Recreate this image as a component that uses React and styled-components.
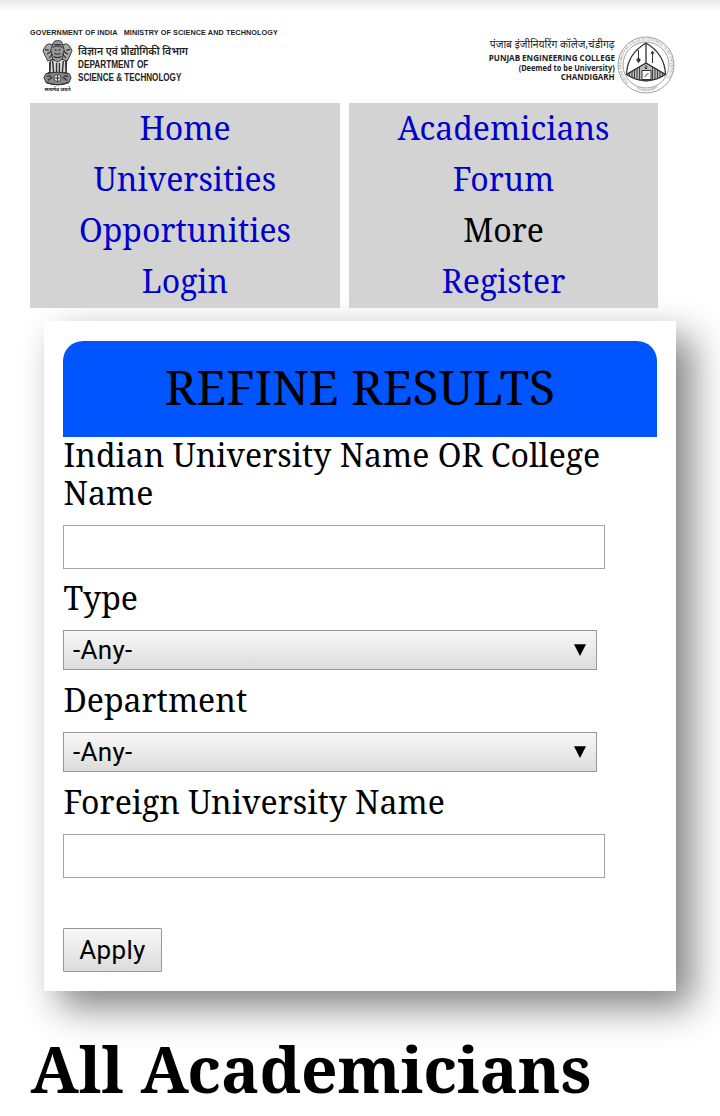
import React from "react";
import styled, { createGlobalStyle } from "styled-components";

const serif = `"Noto Serif", "Droid Serif", "DejaVu Serif Condensed", "DejaVu Serif", serif`;
const hindi = `"Noto Sans Devanagari", "Lohit Devanagari", "Noto Sans", FreeSans, sans-serif`;

const GlobalStyle = createGlobalStyle`
  * { box-sizing: border-box; }
  body { margin: 0; background: #fff; color: #000; font-family: ${serif}; overflow: hidden; }
`;

const Page = styled.div`
  width: 720px;
  height: 1116px;
  overflow: hidden;
  display: flex;
  flex-direction: column;
  background: linear-gradient(#e9e9e9, #fff 11px);
`;

const Header = styled.header`
  display: flex;
  justify-content: space-between;
  height: 103px;
  padding: 28px 45px 0 30px;
  color: #222;
`;

const Ministry = styled.div`
  display: flex;
  flex-direction: column;
`;

const MinistryTitle = styled.div`
  font: bold 7.2px/10px "Liberation Sans", sans-serif;
  white-space: pre;
  letter-spacing: 0.13px;
`;

const Department = styled.div`
  display: flex;
  gap: 5px;
  padding: 1px 0 0 12px;
`;

const EmblemColumn = styled.div`
  display: flex;
  flex-direction: column;
  align-items: center;
  gap: 1px;
  width: 31px;
`;

const Motto = styled.span`
  font: bold 5px/6px ${hindi};
  white-space: nowrap;
`;

const DepartmentText = styled.div`
  width: 111px;
  padding-top: 7px;
  font: bold 10.3px/12.5px "Liberation Sans", sans-serif;
  white-space: nowrap;
`;

const HindiLine = styled.div`
  width: max-content;
  font: ${(p) => p.$weight || 400} ${(p) => p.$size}px/13px ${hindi};
  white-space: nowrap;
  transform: scaleX(${(p) => p.$scale});
  transform-origin: ${(p) => p.$origin || "left"};
`;

const Narrow = styled.div`
  transform: scaleX(${(p) => p.$scale});
  transform-origin: ${(p) => p.$origin || "left"};
`;

const College = styled.div`
  display: flex;
  gap: 2px;
  padding-top: 8px;
`;

const CollegeText = styled.div`
  width: 126px;
  display: flex;
  flex-direction: column;
  align-items: flex-end;
  padding-top: 3px;
  font: 700 8.6px/9.5px "Open Sans", "Noto Sans", sans-serif;
  white-space: nowrap;

  ${HindiLine} {
    margin-bottom: 2px;
  }
`;

const Nav = styled.nav`
  position: relative;
  z-index: 1;
  display: grid;
  grid-template-columns: 310px 309px;
  grid-template-rows: 51px 51px 51px 52px;
  column-gap: 9px;
  padding-left: 30px;
`;

const NavItem = styled.a`
  background: #d3d3d3;
  color: ${(p) => (p.$plain ? "#000" : "#0000cd")};
  font-size: 32px;
  line-height: 50px;
  text-align: center;
`;

const Card = styled.section`
  width: 632px;
  height: 670px;
  margin: 13px 0 0 44px;
  padding: 20px 19px;
  background: #fff;
  box-shadow: 16px 16px 36px #808080;
`;

const CardTitle = styled.h2`
  margin: 0 0 -1px;
  height: 96px;
  border-radius: 20px 20px 0 0;
  background: #0055ff;
  font-size: 48px;
  font-weight: 400;
  line-height: 91px;
  text-align: center;
`;

const Field = styled.div`
  display: flex;
  flex-direction: column;
  margin-bottom: ${(p) => p.$after}px;
`;

const Label = styled.label`
  margin-bottom: 13px;
  padding-left: 0.5px;
  font-size: 32px;
  line-height: 38px;
  white-space: nowrap;
`;

const TextInput = styled.input`
  width: 542px;
  height: 44px;
  border: 1px solid #a5a5a5;
  background: #fff;
`;

const SelectBox = styled.div`
  display: flex;
  align-items: center;
  justify-content: space-between;
  width: 534px;
  height: 40px;
  padding: 0 10px 0 9px;
  border: 1px solid #989898;
  background: linear-gradient(#f8f8f8, #dcdcdc);
  font: 26px/38px Roboto, sans-serif;
  letter-spacing: 0.3px;
`;

const ApplyButton = styled.button`
  display: block;
  width: 99px;
  height: 44px;
  margin-top: 50px;
  padding: 0;
  border: 1px solid #989898;
  border-radius: 1px;
  background: linear-gradient(#f8f8f8, #dcdcdc);
  color: #000;
  font: 26px/42px Roboto, sans-serif;
  letter-spacing: 0.3px;
`;

const PageTitle = styled.h1`
  position: relative;
  margin: 40px 0 0 30.5px;
  font-size: 64px;
  line-height: 76px;
  white-space: nowrap;
`;

const Arrow = () => (
  <svg width="12" height="12" viewBox="0 0 12 12">
    <path d="M0 .3h12L6 12z" />
  </svg>
);

const Emblem = () => (
  <svg width="31" height="47" viewBox="0 0 32 47" fill="#aaa" stroke="#333" strokeWidth="1">
    <path d="M9 21 8 36h17l-1-16z" fill="#ddd" />
    <path d="M4 6Q7 3 10 5l3 4-1 11-6 2-3-6-2-5z" />
    <path d="M28 6Q25 3 22 5l-3 4 1 11 6 2 3-6 2-5z" />
    <path d="M11 4Q13 0 16 1q4-1 5 3l2 7-2 9-5 3-5-3-2-9z" fill="#999" />
    <path d="M12 5h8M11 8q5-3 10 0M13 10l2 1m2 0 2-1M13 14q3 2 6 0M12 17q4 3 8 0M3 10l4 1M25 11l4-1M5 15l5-3M27 15l-5-3M7 19l4-4M25 19l-4-4" fill="none" strokeWidth="1.2" />
    <path d="M8 23v10M11 22l1 12M15 24v10M18 24v10M22 22l-1 12M25 22v11M6 34h20" fill="none" strokeWidth="1.5" />
    <path d="M4 35q12-3 24 0l2 4-2 5q-12 5-24 0l-2-5z" fill="#888" />
    <circle cx="16" cy="39.5" r="3.8" fill="#eee" />
    <path d="M13 39.5h6M16 36.5v6M5 38q3-2 5 1l-4 3M27 38q-3-2-5 1l4 3M4 44q12 5 24 0" fill="none" strokeWidth="1.2" />
  </svg>
);

const Seal = () => (
  <svg width="58" height="58" viewBox="0 0 58 58" fill="none" stroke="#333" strokeWidth="1">
    <defs>
      <path id="ring" d="M11.5 46.5A24.7 24.7 0 1 1 46.5 46.5" />
      <path id="base" d="M15 50Q29 60.5 43 50" />
    </defs>
    <circle cx="29" cy="29" r="28" stroke="#888" strokeWidth=".8" />
    <circle cx="29" cy="29" r="23" stroke="#777" strokeWidth=".7" />
    <g fill="#777" stroke="none" fontFamily="Liberation Sans, sans-serif" fontSize="3.4">
      <text><textPath href="#ring" textLength="110">PUNJAB ENGINEERING COLLEGE (DEEMED TO BE UNIVERSITY)</textPath></text>
      <text><textPath href="#base" startOffset="5">CHANDIGARH</textPath></text>
    </g>
    <path d="M29 7C17 14 10 25 9.5 38.5Q29 51 48.5 38.5C48 25 41 14 29 7Z" strokeWidth="1.3" />
    <path d="M29 27 9.5 38.5Q29 51 48.5 38.5Z" fill="#bbb" />
    <path d="M12.5 37v3M15 35.5v6M17.5 34v8.5M20 32.5v11M22.5 31v13M35.5 31v13M38 32.5v11M40.5 34v8.5M43 35.5v6M45.5 37v3" strokeWidth=".9" />
    <path d="M29 7v20L9.500 38.500M29 27l19.500 11.500" strokeWidth="1.3" />
    <path d="M21.500 14v13M35.500 27V15l-1.500 3M35.500 15l1.500 3" />
    <circle cx="21.500" cy="24" r="1.600" fill="#333" />
    <path d="M25 34.500h9v9h-9z" fill="#fff" />
    <path d="m27.500 41 4-4M29 29v4m-1.500-1.500L29 33l1.500-1.500" />
  </svg>
);

const links = [
  ["Home"],
  ["Academicians"],
  ["Universities"],
  ["Forum"],
  ["Opportunities"],
  ["More", true],
  ["Login"],
  ["Register"],
];

export default function App() {
  return (
    <Page>
      <GlobalStyle />
      <Header>
        <Ministry>
          <MinistryTitle>GOVERNMENT OF INDIA   MINISTRY OF SCIENCE AND TECHNOLOGY</MinistryTitle>
          <Department>
            <EmblemColumn>
              <Emblem />
              <Motto>सत्यमेव जयते</Motto>
            </EmblemColumn>
            <DepartmentText>
              <HindiLine $size={11.5} $weight={600} $scale={0.895}>विज्ञान एवं प्रौद्योगिकी विभाग</HindiLine>
              <Narrow $scale={0.8}>DEPARTMENT OF</Narrow>
              <Narrow $scale={0.785}>SCIENCE &amp; TECHNOLOGY</Narrow>
            </DepartmentText>
          </Department>
        </Ministry>
        <College>
          <CollegeText>
            <HindiLine $size={11.5} $scale={0.9} $origin="right">पंजाब इंजीनियरिंग कॉलेज,चंडीगढ़</HindiLine>
            <Narrow $scale={0.935} $origin="right">PUNJAB ENGINEERING COLLEGE</Narrow>
            <Narrow $scale={0.86} $origin="right">(Deemed to be University)</Narrow>
            <Narrow $scale={0.92} $origin="right">CHANDIGARH</Narrow>
          </CollegeText>
          <Seal />
        </College>
      </Header>
      <Nav>
        {links.map(([text, plain]) => (
          <NavItem key={text} $plain={plain}>{text}</NavItem>
        ))}
      </Nav>
      <Card>
        <CardTitle>REFINE RESULTS</CardTitle>
        <Field $after={10}>
          <Label>
            Indian University Name OR College
            <br />
            Name
          </Label>
          <TextInput />
        </Field>
        <Field $after={11}>
          <Label>Type</Label>
          <SelectBox>-Any-<Arrow /></SelectBox>
        </Field>
        <Field $after={11}>
          <Label>Department</Label>
          <SelectBox>-Any-<Arrow /></SelectBox>
        </Field>
        <Field $after={0}>
          <Label>Foreign University Name</Label>
          <TextInput />
        </Field>
        <ApplyButton>Apply</ApplyButton>
      </Card>
      <PageTitle>All Academicians</PageTitle>
    </Page>
  );
}
